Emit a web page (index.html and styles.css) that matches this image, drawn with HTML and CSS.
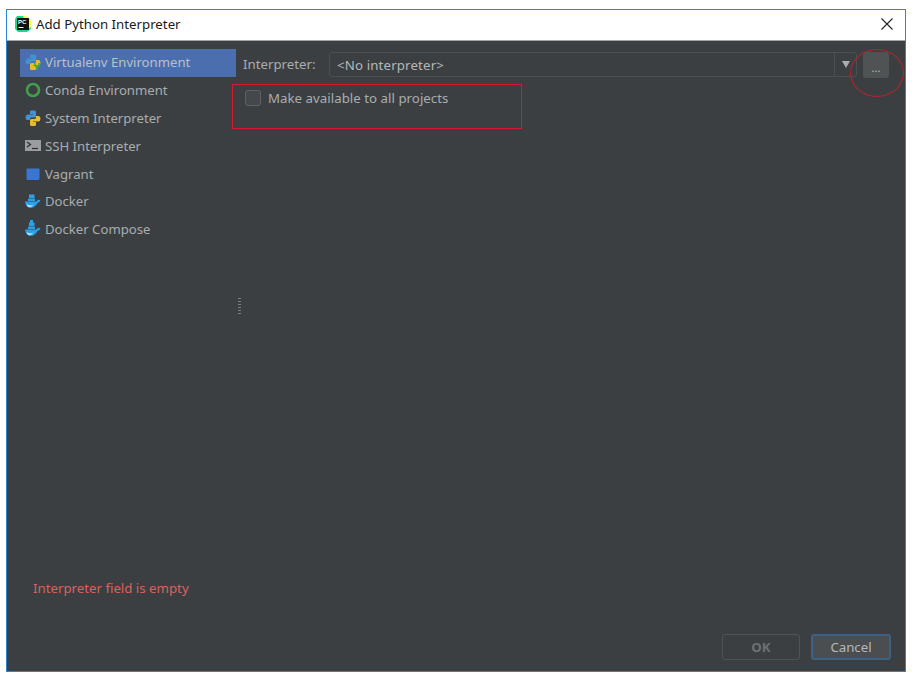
FILE: index.html
```html
<!DOCTYPE html>
<html lang="en">
<head>
<meta charset="utf-8">
<title>Add Python Interpreter</title>
<link rel="stylesheet" href="styles.css">
</head>
<body>
<div class="window">
  <header class="titlebar">
    <svg class="app-icon" width="18" height="18" viewBox="0 0 18 18">
      <path d="M3 1h8l6 4v9l-4 3H4L1 14V4z" fill="#21d789"/>
      <path d="M9 1h3l5 4v7l-3 3z" fill="#fcf84a"/>
      <rect x="3" y="3" width="12" height="12" fill="#111"/>
      <text x="4" y="9" class="app-icon-text">PC</text>
      <rect x="4.500" y="12" width="5" height="1" fill="#fff"/>
    </svg>
    <span class="title">Add Python Interpreter</span>
    <svg class="close" width="12" height="12" viewBox="0 0 12 12"><path d="M.5.5l11 11M11.500.5l-11 11" stroke="#222" stroke-width="1.100" fill="none"/></svg>
  </header>
  <div class="body">
    <div class="columns">
      <nav class="sidebar">
        <div class="item selected">
          <svg class="icon" viewBox="0 0 16 16"><use href="#py"/><path d="M9.500 9l2.500 6 2.500-6" fill="none" stroke="#3fae3f" stroke-width="1.600"/></svg>
          <span>Virtualenv Environment</span>
        </div>
        <div class="item">
          <svg class="icon" viewBox="0 0 16 16"><circle cx="8" cy="8" r="6" fill="none" stroke="#3f9f4c" stroke-width="2.600"/></svg>
          <span>Conda Environment</span>
        </div>
        <div class="item">
          <svg class="icon" viewBox="0 0 16 16"><use href="#py"/></svg>
          <span>System Interpreter</span>
        </div>
        <div class="item">
          <svg class="icon" viewBox="0 0 16 16"><rect y="2" width="16" height="11" fill="#9a9d9f"/><path d="M2 4l3.500 2.500L2 9" fill="none" stroke="#2b2d2e" stroke-width="1.200"/><path d="M7 10.500h6" stroke="#2b2d2e" stroke-width="1.200"/></svg>
          <span>SSH Interpreter</span>
        </div>
        <div class="item">
          <svg class="icon" viewBox="0 0 16 16"><path d="M1.500 3.500Q1.500 2.500 2.500 2.500h12v10l-1 1.500H2.500l-1-1z" fill="#3a75d4"/></svg>
          <span>Vagrant</span>
        </div>
        <div class="item">
          <svg class="icon" viewBox="0 0 16 16"><use href="#whale"/></svg>
          <span>Docker</span>
        </div>
        <div class="item">
          <svg class="icon" viewBox="0 0 16 16"><rect x="5" y="-1" width="3" height="3" fill="#2aa0e8"/><use href="#whale"/></svg>
          <span>Docker Compose</span>
        </div>
      </nav>
      <div class="divider"><span class="grip"></span></div>
      <main class="content">
        <div class="row">
          <label class="label">Interpreter:</label>
          <div class="combo">
            <span class="combo-value">&lt;No interpreter&gt;</span>
            <span class="combo-arrow"></span>
          </div>
          <button class="browse">...</button>
        </div>
        <div class="check-row">
          <span class="checkbox"></span>
          <span>Make available to all projects</span>
        </div>
      </main>
    </div>
    <p class="error">Interpreter field is empty</p>
    <footer class="footer">
      <button class="btn disabled">OK</button>
      <button class="btn default">Cancel</button>
    </footer>
  </div>
  <div class="mark-rect"></div>
  <div class="mark-ellipse"></div>
</div>
<svg class="defs" width="0" height="0">
  <defs>
    <g id="py">
      <path d="M5 1.500Q5 .5 6.500 .5h3Q11 .5 11 2v4q0 1.500-1.500 1.500h-3Q5 7.500 5 9v1H2.500Q.5 10 .5 7.500T2.500 4.500H8V4H5z" fill="#4293cf"/>
      <path d="M11 15q0 1-1.500 1h-3Q5 16 5 14.500v-4Q5 9 6.500 9h3Q11 9 11 7.500V6h2.500q2 0 2 2.500t-2 3H8v.5h3z" fill="#e8bd2c"/>
    </g>
    <g id="whale">
      <rect x="4" y="1.500" width="5.500" height="3.500" fill="#2aa0e8"/>
      <rect x="3" y="5.500" width="7" height="2.500" fill="#2aa0e8"/>
      <path d="M0 8.500h11.500q1-2.500 4-1.300-.5 2.300-3 2.800Q10 15 5 15 1 15 0 8.500z" fill="#2aa0e8"/>
      <path d="M1.500 11q3 2.500 7 .5-2 2.500-4.500 2.500-1.500 0-2.500-3z" fill="#d5ecfa"/>
    </g>
  </defs>
</svg>
</body>
</html>
```
FILE: styles.css
```css
* { box-sizing: border-box; }
html, body { margin: 0; height: 100%; background: #fff; }
body {
  padding: 9px 6px 7px 6px;
  font-family: "Noto Sans", "Open Sans", sans-serif;
  font-size: 13.250px;
  overflow: hidden;
}
.window {
  position: relative;
  height: 100%;
  display: flex;
  flex-direction: column;
  border: 1px solid #2b85d0;
  background: #3c3f41;
  color: #a9adaf;
}
.titlebar {
  flex: 0 0 31px;
  display: flex;
  align-items: center;
  gap: 4px;
  padding: 0 12px 2px 7px;
  background: #fff;
  border-bottom: 1px solid #a6a6a6;
  color: #1a1a1a;
}
.app-icon { flex: none; }
.app-icon-text { font: bold 6px "Liberation Sans", sans-serif; fill: #fff; }
.title { flex: 1; font-size: 13.250px; }
.close { flex: none; }
.body { flex: 1; display: flex; flex-direction: column; min-height: 0; }
.columns { flex: 1; display: flex; min-height: 0; }
.sidebar {
  flex: 0 0 216px;
  margin-left: 13px;
  padding-top: 8px;
  font-size: 13.150px;
}
.item {
  height: 27.800px;
  display: flex;
  align-items: center;
  gap: 4px;
  padding: 0 0 1px 5px;
  white-space: nowrap;
}
.item.selected { background: #4b6eaf; color: #b9c0c9; }
.icon { width: 16px; height: 16px; flex: none; overflow: visible; }
.divider { flex: 0 0 7px; display: flex; align-items: center; justify-content: center; }
.grip {
  width: 3px;
  height: 16px;
  margin-bottom: 8px;
  background: repeating-linear-gradient(#7b7e80 0 1px, #3c3f41 1px 3px);
}
.content { flex: 1; padding: 11px 15px 0 0; min-width: 0; }
.row { display: flex; align-items: flex-start; }
.label { flex: 0 0 86px; line-height: 24px; }
.combo {
  flex: 0 0 528px;
  height: 25px;
  display: flex;
  align-items: center;
  border: 1px solid #4c4f51;
  border-radius: 3px;
  padding-left: 7px;
  background: #3c3f41;
  color: #b4b8ba;
}
.combo-value { flex: 1; letter-spacing: .15px; }
.combo-arrow {
  flex: 0 0 22px;
  height: 100%;
  border-left: 1px solid #4c4f51;
  display: flex;
  align-items: center;
  justify-content: center;
}
.combo-arrow::after {
  content: "";
  border: 4px solid transparent;
  border-top: 7px solid #a9adaf;
  border-bottom: 0;
}
.browse {
  margin-left: 6px;
  width: 26px;
  height: 26px;
  border: 0;
  border-radius: 3px;
  background: #505354;
  color: #b4b8ba;
  font: 11px "Noto Sans", sans-serif;
  padding: 4px 0 0;
}
.check-row {
  display: flex;
  align-items: center;
  gap: 7px;
  margin-top: 12px;
  margin-left: 2px;
  height: 16px;
  letter-spacing: .03px;
}
.checkbox {
  width: 16px;
  height: 16px;
  border: 1px solid #5d6163;
  border-radius: 3px;
  background: #45484a;
}
.error {
  margin: 0 0 37px 26px;
  color: #dc5f5f;
  line-height: 18px;
}
.footer {
  display: flex;
  justify-content: flex-end;
  gap: 11px;
  padding: 0 14px 11px 0;
}
.btn {
  height: 26px;
  border-radius: 3px;
  font: 13.250px "Noto Sans", sans-serif;
  padding: 0;
}
.btn.disabled {
  width: 78px;
  border: 1px solid #505354;
  background: #3c3f41;
  color: #6d7072;
  font-weight: 700;
}
.btn.default {
  width: 80px;
  border: 2px solid #3d6185;
  background: #4b4e50;
  color: #b4b8ba;
}
.mark-rect {
  position: absolute;
  left: 225px;
  top: 74px;
  width: 290px;
  height: 45px;
  border: 1px solid #d8182c;
}
.mark-ellipse {
  position: absolute;
  left: 843px;
  top: 39px;
  width: 54px;
  height: 48px;
  border: 1px solid #b3242f;
  border-radius: 50%;
}
.defs { position: absolute; }
```
